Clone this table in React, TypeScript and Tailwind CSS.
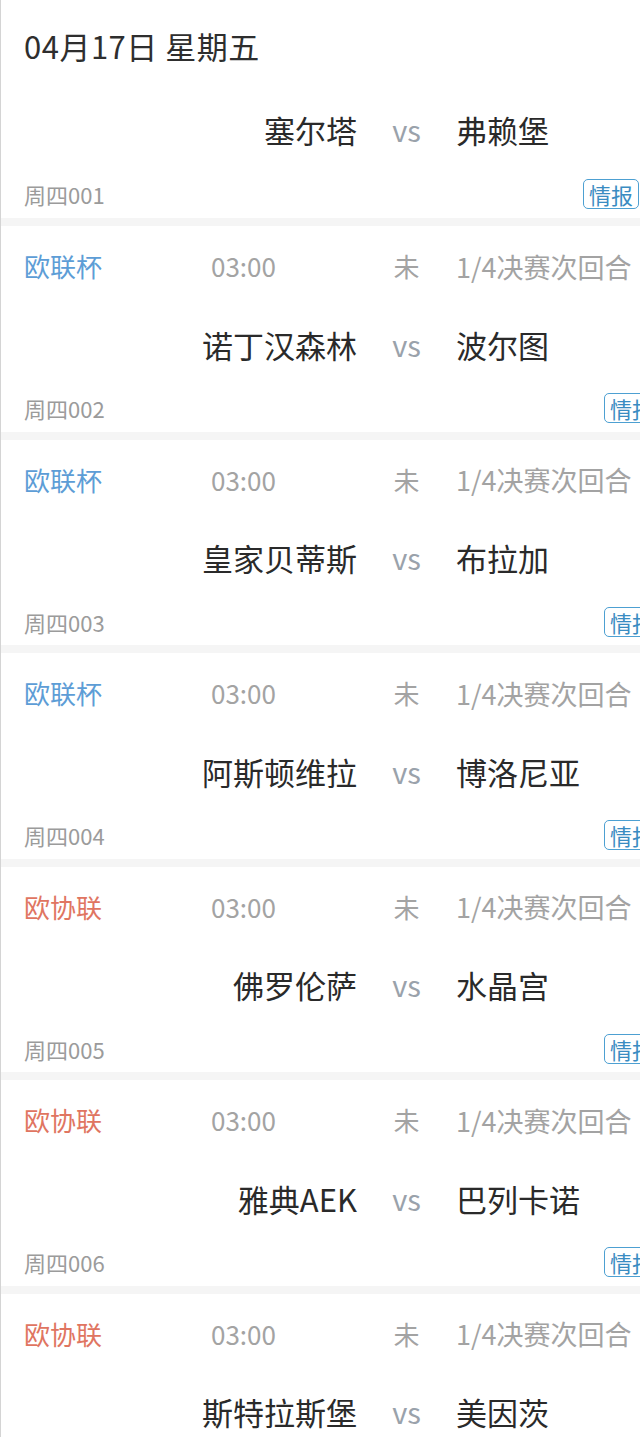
const matches = [
  { league: '欧联杯', red: false, home: '诺丁汉森林', away: '波尔图', code: '周四002' },
  { league: '欧联杯', red: false, home: '皇家贝蒂斯', away: '布拉加', code: '周四003' },
  { league: '欧联杯', red: false, home: '阿斯顿维拉', away: '博洛尼亚', code: '周四004' },
  { league: '欧协联', red: true, home: '佛罗伦萨', away: '水晶宫', code: '周四005' },
  { league: '欧协联', red: true, home: '雅典AEK', away: '巴列卡诺', code: '周四006' },
  { league: '欧协联', red: true, home: '斯特拉斯堡', away: '美因茨', code: '周四007' },
];

const font = { fontFamily: '"Noto Sans CJK SC", "Noto Sans", sans-serif' };

function Teams({ home, away }: { home: string; away: string }) {
  return (
    <div className="flex items-center leading-none">
      <div className="w-[356px] shrink-0 text-right text-[31px] text-[#2a2a2a] whitespace-nowrap">{home}</div>
      <div className="w-[99px] shrink-0 text-center text-[29px] text-[#9aa2ab]">vs</div>
      <div className="text-[31px] text-[#2a2a2a] whitespace-nowrap">{away}</div>
    </div>
  );
}

function Badge({ shift }: { shift?: boolean }) {
  return (
    <div
      className={
        'shrink-0 h-[30px] px-[5px] flex items-center rounded-[5px] border-[1.5px] border-[#4da0d2] text-[22px] leading-none text-[#3a8cc2] ' +
        (shift ? 'mr-[-20px]' : 'mr-[1px]')
      }
    >
      情报
    </div>
  );
}

export default function App() {
  return (
    <div className="w-[640px] h-[1437px] overflow-hidden bg-white border-l border-[#d4d4d4]" style={font}>
      {/* 首场 */}
      <div className="h-[218px] flex flex-col">
        <div className="h-[94px] pb-[4px] flex items-center pl-[23px] text-[31px] leading-none text-[#2e2e2e] tracking-[0.5px]">
          04月17日 星期五
        </div>
        <div className="h-[74px] pb-[4px] flex items-center">
          <Teams home="塞尔塔" away="弗赖堡" />
        </div>
        <div className="h-[50px] pt-[2px] flex items-center justify-between pl-[23px]">
          <span className="text-[22px] leading-none text-[#9b9b9b]">周四001</span>
          <Badge />
        </div>
      </div>
      <div className="h-[8px] bg-[#f5f5f5]" />

      {matches.map((m, i) => (
        <div key={i}>
          <div className="h-[205.5px] flex flex-col">
            <div className="h-[82px] pb-[2px] flex items-center leading-none text-[26px] whitespace-nowrap">
              <div className={'w-[210px] shrink-0 pl-[23px] ' + (m.red ? 'text-[#e07561]' : 'text-[#5d9dd6]')}>
                {m.league}
              </div>
              <div className="w-[146px] shrink-0 text-[#a3a3a3]">03:00</div>
              <div className="w-[99px] shrink-0 text-center text-[#a3a3a3]">未</div>
              <div className="text-[27px] text-[#a3a3a3]">1/4决赛次回合</div>
            </div>
            <div className="h-[76px] pb-[4px] flex items-center">
              <Teams home={m.home} away={m.away} />
            </div>
            <div className="flex-1 pt-[1px] flex items-center justify-between pl-[23px]">
              <span className="text-[22px] leading-none text-[#9b9b9b]">{m.code}</span>
              <Badge shift />
            </div>
          </div>
          <div className="h-[8px] bg-[#f5f5f5]" />
        </div>
      ))}
    </div>
  );
}
